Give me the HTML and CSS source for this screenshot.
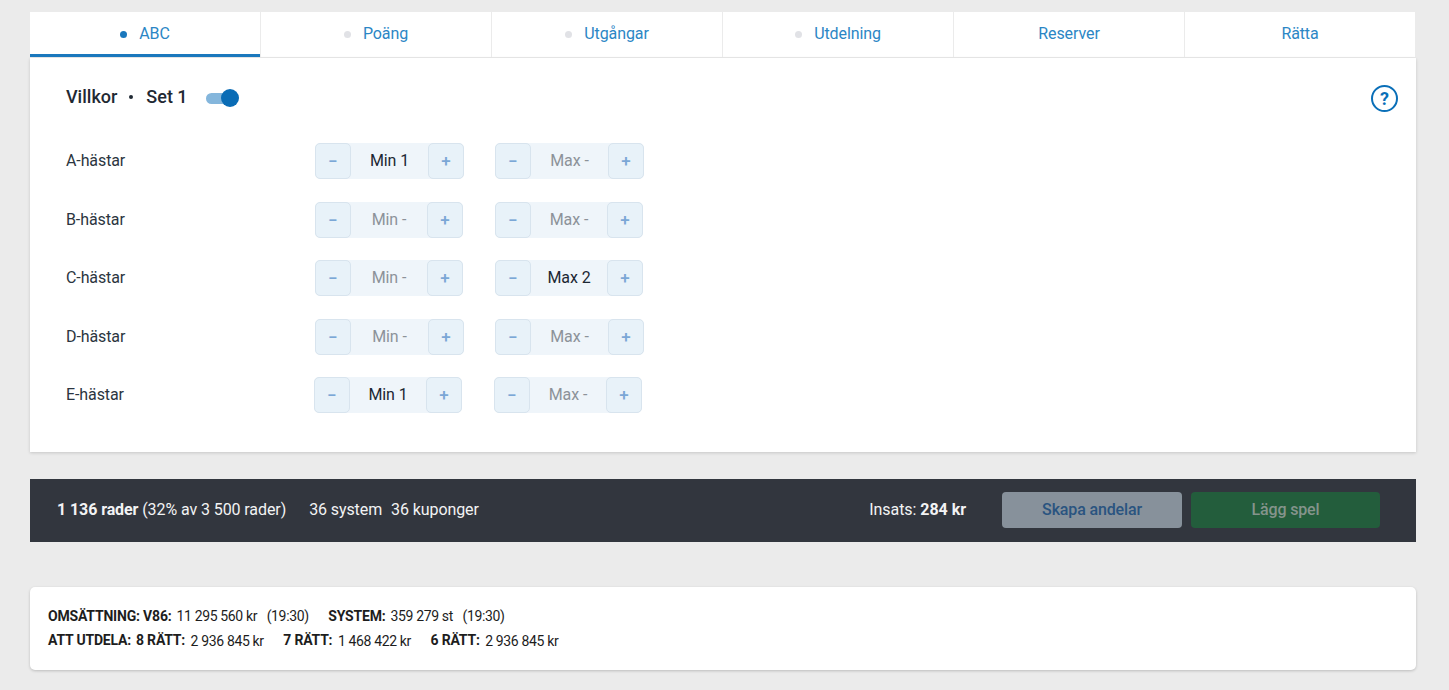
FILE: index.html
```html
<!DOCTYPE html>
<html lang="sv">
<head>
<meta charset="utf-8">
<title>ABC</title>
<link rel="stylesheet" href="styles.css">
</head>
<body>
<nav class="tabs">
  <a class="tab tab-active"><i class="dot dot-on"></i>ABC</a>
  <a class="tab"><i class="dot"></i>Poäng</a>
  <a class="tab"><i class="dot"></i>Utgångar</a>
  <a class="tab"><i class="dot"></i>Utdelning</a>
  <a class="tab">Reserver</a>
  <a class="tab">Rätta</a>
</nav>
<main class="card">
  <header class="card-head">
    <h2 class="title"><span>Villkor</span><span class="sep"></span><span>Set 1</span></h2>
    <span class="toggle"><span class="knob"></span></span>
    <span class="help">?</span>
  </header>
  <div class="row row-wide">
    <span class="label">A-hästar</span>
    <div class="stepper"><b class="btn">−</b><span class="val">Min 1</span><b class="btn">+</b></div>
    <div class="stepper"><b class="btn">−</b><span class="val muted">Max -</span><b class="btn">+</b></div>
  </div>
  <div class="row">
    <span class="label">B-hästar</span>
    <div class="stepper"><b class="btn">−</b><span class="val muted">Min -</span><b class="btn">+</b></div>
    <div class="stepper"><b class="btn">−</b><span class="val muted">Max -</span><b class="btn">+</b></div>
  </div>
  <div class="row">
    <span class="label">C-hästar</span>
    <div class="stepper"><b class="btn">−</b><span class="val muted">Min -</span><b class="btn">+</b></div>
    <div class="stepper"><b class="btn">−</b><span class="val">Max 2</span><b class="btn">+</b></div>
  </div>
  <div class="row row-wide">
    <span class="label">D-hästar</span>
    <div class="stepper"><b class="btn">−</b><span class="val muted">Min -</span><b class="btn">+</b></div>
    <div class="stepper"><b class="btn">−</b><span class="val muted">Max -</span><b class="btn">+</b></div>
  </div>
  <div class="row row-e">
    <span class="label">E-hästar</span>
    <div class="stepper"><b class="btn">−</b><span class="val">Min 1</span><b class="btn">+</b></div>
    <div class="stepper"><b class="btn">−</b><span class="val muted">Max -</span><b class="btn">+</b></div>
  </div>
</main>
<section class="bar">
  <div class="bar-info"><span><strong>1 136 rader</strong> (32% av 3 500 rader)</span><span class="sys">36 system</span><span class="kup">36 kuponger</span></div>
  <div class="stake">Insats: <strong>284 kr</strong></div>
  <span class="cta cta-share">Skapa andelar</span>
  <span class="cta cta-play">Lägg spel</span>
</section>
<footer class="stats">
  <p><b>OMSÄTTNING: V86:</b><span class="num">11 295 560 kr</span><span class="time">(19:30)</span><b class="next">SYSTEM:</b><span class="num">359 279 st</span><span class="time">(19:30)</span></p>
  <p><b class="lead">ATT UTDELA:</b><b>8 RÄTT:</b><span class="num num-low">2 936 845 kr</span><b class="next">7 RÄTT:</b><span class="num num-low">1 468 422 kr</span><b class="next">6 RÄTT:</b><span class="num num-low">2 936 845 kr</span></p>
</footer>
</body>
</html>
```
FILE: styles.css
```css
* { box-sizing: border-box; }
html, body { margin: 0; height: 690px; overflow: hidden; }
body {
  background: #ebebeb;
  padding: 12px 33px 0 30px;
  font-family: Roboto, "Liberation Sans", sans-serif;
  font-size: 16px;
  letter-spacing: -0.1px;
  color: #1f2933;
}
.tabs { display: flex; width: 1385px; height: 45px; background: #fff; }
.tab {
  flex: 1 1 0;
  display: flex;
  align-items: center;
  justify-content: center;
  color: #2b86c5;
  border-right: 1px solid #ebebeb;
  padding-bottom: 2px;
}
.tab:last-child { border-right: 0; }
.tab-active { box-shadow: inset 0 -3px 0 #1a78bd; }
.dot { width: 7px; height: 7px; border-radius: 50%; background: #e1e2e6; margin-right: 12px; margin-top: 2px; }
.dot-on { background: #1a78bd; }
.card {
  width: 1386px;
  height: 394px;
  margin-top: 1px;
  background: #fff;
  box-shadow: 0 1px 3px rgba(0,0,0,.16);
  padding: 27px 18px 0 36px;
}
.card-head { display: flex; align-items: center; height: 27px; margin-bottom: 31px; }
.title { display: flex; align-items: center; margin: 0 0 4px; font-size: 18px; font-weight: 500; letter-spacing: 0; color: #1f2933; }
.sep { width: 4px; height: 4px; border-radius: 50%; background: #1f2933; margin: 0 13px 0 12px; }
.toggle { position: relative; width: 26px; height: 11px; margin: 0 auto 0 18px; border-radius: 6px; background: #84b6dc; }
.knob { position: absolute; right: -7px; top: -4px; width: 18px; height: 18px; border-radius: 50%; background: #0a6cb5; }
.help {
  width: 27px; height: 27px; border: 2px solid #0a6fb8; border-radius: 50%;
  display: flex; align-items: center; justify-content: center;
  color: #0a6fb8; font-size: 18px; font-weight: 700; line-height: 1; letter-spacing: 0;
}
.row { display: flex; align-items: center; height: 36px; margin-bottom: 22.5px; }
.label { width: 249px; line-height: 36px; color: #2b3540; }
.row-e .label { width: 248px; }
.stepper { display: flex; width: 148px; height: 36px; margin-right: 32px; background: #eff5fa; border-radius: 5px; }
.row-wide .stepper { width: 149px; margin-right: 31px; }
.btn {
  flex: 0 0 36px;
  display: flex; align-items: center; justify-content: center;
  background: #e8f2f9;
  border: 1px solid #d8e4ee;
  border-radius: 5px;
  color: #7ba7d6;
  font-size: 17px;
  font-weight: 500;
}
.val { flex: 1; text-align: center; line-height: 36px; color: #1c2733; }
.muted { color: #8c9299; }
.bar {
  display: flex; align-items: center;
  width: 1386px; height: 63px;
  margin-top: 27px;
  padding: 0 36px 2px 27px;
  background: #32363e;
  color: #f2f3f4;
  letter-spacing: -0.09px;
}
.bar-info { flex: 1; display: flex; }
.bar-info strong { font-weight: 700; }
.sys { margin-left: 23px; }
.kup { margin-left: 9px; }
.stake { margin-right: 36px; letter-spacing: -0.04px; }
.cta {
  display: flex; align-items: center; justify-content: center;
  height: 36px; border-radius: 4px; font-weight: 500; letter-spacing: -0.15px;
}
.cta-share { width: 180px; background: #87919b; color: #2a5480; margin-right: 9px; }
.cta-play { width: 189px; background: #235d3c; color: #85948c; }
.stats {
  width: 1386px; height: 83px;
  margin-top: 45px;
  padding: 17px 18px 0;
  background: #fff;
  border-radius: 5px;
  box-shadow: 0 1px 3px rgba(0,0,0,.2);
  font-size: 14px;
  letter-spacing: -0.35px;
  color: #1d1d1d;
}
.stats p { display: flex; margin: 0; line-height: 24px; }
.stats b { font-weight: 700; letter-spacing: -0.19px; }
.lead { margin-right: 5px; }
.num { margin-left: 5px; }
.num-low { position: relative; top: 1px; margin-left: 5.5px; }
.time { margin-left: 9.5px; }
.next { margin-left: 19.5px; }
```
